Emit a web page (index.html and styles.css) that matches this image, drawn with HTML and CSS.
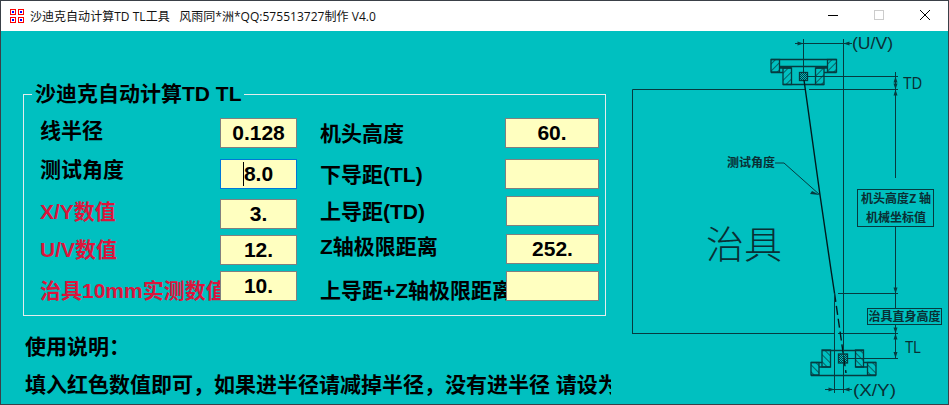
FILE: index.html
```html
<!DOCTYPE html>
<html lang="zh-CN">
<head>
  <meta charset="UTF-8" />
  <title>沙迪克自动计算TD TL工具</title>
  <link rel="stylesheet" href="styles.css">
</head>
<body>
  <div class="window">
    <div class="titlebar">
      <svg class="app-icon" width="14" height="14" viewBox="0 0 14 14">
        <rect x="0.5" y="0.5" width="5" height="5" fill="#fff" stroke="#f00"/>
        <rect x="8.5" y="0.5" width="5" height="5" fill="#fff" stroke="#f00"/>
        <rect x="0.5" y="8.5" width="5" height="5" fill="#fff" stroke="#f00"/>
        <rect x="8.5" y="8.5" width="5" height="5" fill="#fff" stroke="#f00"/>
        <rect x="2" y="2" width="2" height="2" fill="#00f"/>
        <rect x="10" y="2" width="2" height="2" fill="#00f"/>
        <rect x="2" y="10" width="2" height="2" fill="#00f"/>
        <rect x="10" y="10" width="2" height="2" fill="#00f"/>
      </svg>
      <div class="title">沙迪克自动计算TD TL工具&nbsp;&nbsp; 风雨同*洲*QQ:575513727制作 V4.0</div>
      <div class="win-btns">
        <svg class="win-btn" width="46" height="30" viewBox="0 0 46 30"><path d="M18 14.5h10" stroke="#000" fill="none"/></svg>
        <svg class="win-btn" width="46" height="30" viewBox="0 0 46 30"><rect x="18.5" y="9.5" width="9" height="9" stroke="#ccc" fill="none"/></svg>
        <svg class="win-btn" width="46" height="30" viewBox="0 0 46 30"><path d="M18 9l10 10M28 9l-10 10" stroke="#000" fill="none"/></svg>
      </div>
    </div>

    <div class="client">
      <div class="form-side">
        <fieldset class="group">
          <legend>沙迪克自动计算TD TL</legend>
          <div class="columns">
            <div class="col col-left">
              <div class="row"><label>线半径</label><input class="field" value="0.128" readonly></div>
              <div class="row"><label>测试角度</label><div class="focus-wrap"><input class="field focused" value="8.0" readonly><span class="caret"></span></div></div>
              <div class="row"><label class="red">X/Y数值</label><input class="field" value="3." readonly></div>
              <div class="row"><label class="red">U/V数值</label><input class="field" value="12." readonly></div>
              <div class="row"><label class="red">治具10mm实测数值</label><input class="field" value="10." readonly></div>
            </div>
            <div class="col col-right">
              <div class="row"><label>机头高度</label><input class="field" value="60." readonly></div>
              <div class="row"><label>下导距(TL)</label><input class="field" readonly></div>
              <div class="row"><label>上导距(TD)</label><input class="field" readonly></div>
              <div class="row"><label>Z轴极限距离</label><input class="field" value="252." readonly></div>
              <div class="row"><label>上导距+Z轴极限距离</label><input class="field" readonly></div>
            </div>
          </div>
        </fieldset>
        <div class="notes">
          <p>使用说明&#xFF1A;</p>
          <p>填入红色数值即可&#xFF0C;如果进半径请减掉半径&#xFF0C;没有进半径 请设为0</p>
        </div>
      </div>

      <!-- viewBox uses page coordinates, easier to measure against the drawing -->
      <svg class="drawing" width="337" height="373" viewBox="611 31 337 373">
        <defs>
          <pattern id="hatch" width="5" height="5" patternUnits="userSpaceOnUse" patternTransform="rotate(45)">
            <line x1="0" y1="0" x2="0" y2="5" stroke="#063a3f" stroke-width="1.4"/>
          </pattern>
          <pattern id="hatch2" width="5" height="5" patternUnits="userSpaceOnUse" patternTransform="rotate(-45)">
            <line x1="0" y1="0" x2="0" y2="5" stroke="#063a3f" stroke-width="1.4"/>
          </pattern>
          <pattern id="mesh" width="2" height="2" patternUnits="userSpaceOnUse">
            <rect width="1" height="1" fill="#063a3f"/>
            <rect x="1" y="1" width="1" height="1" fill="#063a3f"/>
          </pattern>
        </defs>

        <g class="lines">
          <!-- jig outline -->
          <path d="M632.5 334V89.5H805M809 89.5H898"/>
          <path d="M632.5 333.5H834M838 333.5H898M838 293.5H898"/>
          <!-- upper guide -->
          <g class="guide">
            <rect x="771" y="59.5" width="8.5" height="12.5" fill="url(#hatch)"/>
            <rect x="783" y="68" width="8.5" height="16.5" fill="url(#hatch)"/>
            <rect x="815.5" y="68" width="8.5" height="16.5" fill="url(#hatch)"/>
            <rect x="827.5" y="59.5" width="9" height="12.5" fill="url(#hatch)"/>
            <path d="M771 59.5H836.5M779.5 66.5H827.5M771 72.5H783M824 72.5H836.5M783 84.5H824M779.5 68H791.5M815.500 68H827.5"/>
            <rect x="799.5" y="72.5" width="8" height="8" fill="url(#mesh)"/>
          </g>
          <!-- lower guide -->
          <g class="guide">
            <rect x="822" y="350" width="8.5" height="17" fill="url(#hatch2)"/>
            <rect x="855.5" y="350" width="8" height="17" fill="url(#hatch2)"/>
            <rect x="811" y="362.5" width="8" height="12.5" fill="url(#hatch2)"/>
            <rect x="867.5" y="362.5" width="8.5" height="12.5" fill="url(#hatch2)"/>
            <path d="M822 350.5H863.5M811 375.5H876M811 362.5H822M863.5 362.5H876M819 367H830.5M855.5 367H867.5"/>
            <rect x="838.5" y="354" width="9" height="9" fill="url(#mesh)"/>
          </g>
          <!-- wire -->
          <path class="heavy" d="M804 80L820 195L831 270L834.5 293"/>
          <path class="heavy" stroke-dasharray="9 4" d="M834.5 293L846 373"/>
          <!-- verticals -->
          <path d="M803.5 39V72M843.5 39V393M834.5 293V393"/>
          <!-- U/V dimension -->
          <path d="M795 43.5H852"/>
          <path class="solid" d="M803.5 43.5l-6-2v4zM843.5 43.5l6-2v4z"/>
          <!-- TD / TL dimension -->
          <path d="M808 76.5H898M895.5 72V178M895.5 226V308M895.5 324V358M848 358.5H898"/>
          <path class="solid" d="M895.5 76.5l-2 6h4zM895.5 89.5l-2-6h4zM895.5 89.5l-2 6h4zM895.5 293.5l-2-6h4zM895.5 333.5l-2-6h4zM895.5 333.5l-2 6h4zM895.5 358l-2-6h4z"/>
          <!-- X/Y dimension -->
          <path d="M825 389.5H852"/>
          <path class="solid" d="M834.5 389.5l-6-2v4zM843.5 389.5l6-2v4z"/>
          <!-- angle leader -->
          <path d="M775 163H784L820 195"/>
          <path class="solid" d="M820 195l-8-4l-2 3z"/>
          <!-- boxes -->
          <rect class="box" x="857.5" y="189.5" width="76" height="37"/>
          <rect class="box" x="867.5" y="308.5" width="74" height="16"/>
        </g>

        <g class="marks">
          <text x="852" y="49" class="dim" textLength="41" lengthAdjust="spacingAndGlyphs">(U/V)</text>
          <text x="903" y="89" class="dim" textLength="19" lengthAdjust="spacingAndGlyphs">TD</text>
          <text x="905" y="353" class="dim" textLength="16" lengthAdjust="spacingAndGlyphs">TL</text>
          <text x="853" y="396" class="dim" textLength="43" lengthAdjust="spacingAndGlyphs">(X/Y)</text>
          <text x="727" y="167" class="note">测试角度</text>
          <text x="861" y="203" class="note">机头高度Z 轴</text>
          <text x="866" y="222" class="note">机械坐标值</text>
          <text x="868.5" y="321" class="note">治具直身高度</text>
          <text x="706" y="258" class="big">治具</text>
        </g>
      </svg>
    </div>
  </div>
</body>
</html>
```

FILE: styles.css
```css
html, body {
  margin: 0;
  padding: 0;
  overflow: hidden;
}

body {
  font-family: "Liberation Sans", "Noto Sans CJK SC", sans-serif;
  color: #000;
}

.window {
  width: 949px;
  height: 405px;
  box-sizing: border-box;
  border: 1px solid #3a4048;
  display: flex;
  flex-direction: column;
}

.titlebar {
  height: 30px;
  flex: none;
  background-color: #fff;
  display: flex;
  align-items: center;
}

.app-icon {
  margin-left: 9px;
  margin-right: 6px;
  flex: none;
}

.title {
  flex-grow: 1;
  font-family: "Open Sans", "Noto Sans CJK SC", sans-serif;
  font-size: 12px;
  letter-spacing: 0.03px;
  color: #111;
  white-space: nowrap;
}

.win-btns {
  display: flex;
}

.win-btn {
  display: block;
}

.client {
  flex-grow: 1;
  min-height: 0;
  background-color: #00c0c0;
  display: flex;
}

.form-side {
  width: 610px;
  flex: none;
  overflow: hidden;
  padding: 49px 0 0 22px;
  box-sizing: border-box;
}

.group {
  margin: 0;
  padding: 10px 0 0 16px;
  width: 583px;
  height: 236px;
  box-sizing: border-box;
  border: 1px solid #e4ecec;
}

.group legend {
  margin-left: -8px;
  padding: 0 3px;
  font-size: 21px;
  font-weight: 700;
  line-height: 28px;
  white-space: nowrap;
}

.columns {
  display: grid;
  grid-template-columns: 280px 279px;
}

.col {
  display: grid;
}

.col-left {
  grid-template-rows: 41px 40px 36px 36px 30px;
}

.col-right {
  grid-template-rows: 41px 37px 38px 37px 30px;
}

.row {
  display: grid;
  height: 30px;
  align-items: center;
}

.col-left .row {
  grid-template-columns: 180px 77px;
}

.col-right .row {
  grid-template-columns: 186px 93px;
}

.col-right .row:nth-child(-n+2) {
  grid-template-columns: 185px 94px;
}

.row label {
  font-size: 21px;
  font-weight: 700;
  line-height: 30px;
  white-space: nowrap;
  overflow: hidden;
}

.red {
  color: #dc143c;
}

/* hand offsets, the source form does not line its labels up with the boxes */
.col-left .row:nth-child(1) label { margin-top: -4px; }
.col-left .row:nth-child(2) label { margin-top: -8px; }
.col-left .row:nth-child(3) label { margin-top: -4px; }
.col-left .row:nth-child(5) label { margin-top: 10px; }
.col-right .row:nth-child(1) label { margin-top: 2px; }
.col-right .row:nth-child(2) label { margin-top: 2px; }
.col-right .row:nth-child(3) label { margin-top: 2px; }
.col-right .row:nth-child(4) label { margin-top: -4px; }
.col-right .row:nth-child(5) label { margin-top: 10px; }

.field {
  display: block;
  width: 100%;
  height: 30px;
  box-sizing: border-box;
  padding: 0;
  margin: 0;
  border: 1px solid #808080;
  border-radius: 0;
  outline: none;
  background-color: #ffffc0;
  font-family: "Liberation Sans", sans-serif;
  font-size: 21px;
  font-weight: 700;
  color: #000;
  text-align: center;
}

.field.focused {
  border-color: #0078d7;
}

.focus-wrap {
  position: relative;
}

.caret {
  position: absolute;
  left: 23px;
  top: 3px;
  width: 1px;
  height: 24px;
  background-color: #000;
}

.notes {
  margin-top: 17px;
  margin-left: 2px;
  font-size: 21px;
  font-weight: 700;
  white-space: nowrap;
}

.notes p {
  margin: 0 0 10px;
  line-height: 28px;
}

.drawing {
  display: block;
  flex: none;
}

.lines path,
.lines rect {
  stroke: #063a3f;
  stroke-width: 1;
}

.lines path,
.lines .box {
  fill: none;
}

.lines .guide path,
.lines .guide rect {
  stroke-width: 1.3;
}

.lines .heavy {
  stroke: #001a1e;
  stroke-width: 1.4;
}

.lines .solid {
  fill: #063a3f;
  stroke: none;
}

.marks text {
  fill: #0a2f34;
}

.marks .dim {
  font-family: "Liberation Sans", sans-serif;
  font-size: 17px;
}

.marks .note {
  font-family: "Noto Sans CJK SC", sans-serif;
  font-size: 12px;
  font-weight: 700;
}

.marks .big {
  font-family: "Noto Sans CJK SC", sans-serif;
  font-size: 38px;
  font-weight: 300;
}
```
